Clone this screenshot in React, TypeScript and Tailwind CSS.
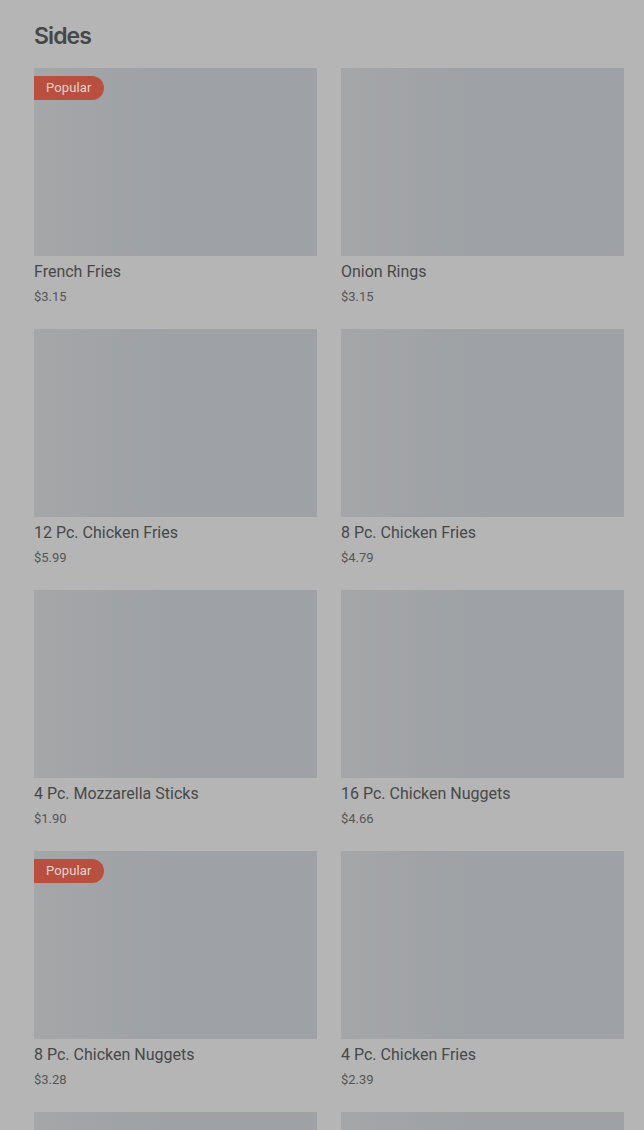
import React from "react";

type Side = {
  name: string;
  price: string;
  popular?: boolean;
};

const sides: Side[] = [
  { name: "French Fries", price: "$3.15", popular: true },
  { name: "Onion Rings", price: "$3.15" },
  { name: "12 Pc. Chicken Fries", price: "$5.99" },
  { name: "8 Pc. Chicken Fries", price: "$4.79" },
  { name: "4 Pc. Mozzarella Sticks", price: "$1.90" },
  { name: "16 Pc. Chicken Nuggets", price: "$4.66" },
  { name: "8 Pc. Chicken Nuggets", price: "$3.28", popular: true },
  { name: "4 Pc. Chicken Fries", price: "$2.39" },
];

const imageClass =
  "relative h-[188px] bg-[#9ea1a5] bg-gradient-to-r from-[#a4a6a8] via-[#9ea1a5] to-[#9ea1a5]";

function SideCard({ side }: { side: Side }) {
  return (
    <div className="flex flex-col">
      <div className={imageClass}>
        {side.popular && (
          <span className="absolute left-0 top-[8px] flex h-[24px] items-center rounded-r-full bg-[#b9503f] pl-[12px] pr-[12px] text-[13px] tracking-[0.01em] text-[#e4d3cf]">
            Popular
          </span>
        )}
      </div>
      <p className="mt-[6px] text-[16px] leading-[20px] text-[#474849]">
        {side.name}
      </p>
      <p className="mt-[6px] text-[13px] leading-[18px] text-[#555657]">
        {side.price}
      </p>
    </div>
  );
}

export default function App() {
  return (
    <div
      className="h-[1130px] overflow-hidden bg-[#b5b5b5] pl-[34px] pr-[20px] pt-[20px]"
      style={{ fontFamily: "Roboto, 'Liberation Sans', sans-serif" }}
    >
      <h1
        className="text-[23px] font-semibold leading-[32px] tracking-[-0.04em] text-[#464748]"
        style={{ fontFamily: "Inter, 'Liberation Sans', sans-serif" }}
      >
        Sides
      </h1>
      <div className="mt-[16px] grid grid-cols-2 gap-x-[24px] gap-y-[23px]">
        {sides.map((side) => (
          <SideCard key={side.name} side={side} />
        ))}
        {/* next row still loading */}
        <div className={imageClass} />
        <div className={imageClass} />
      </div>
    </div>
  );
}
